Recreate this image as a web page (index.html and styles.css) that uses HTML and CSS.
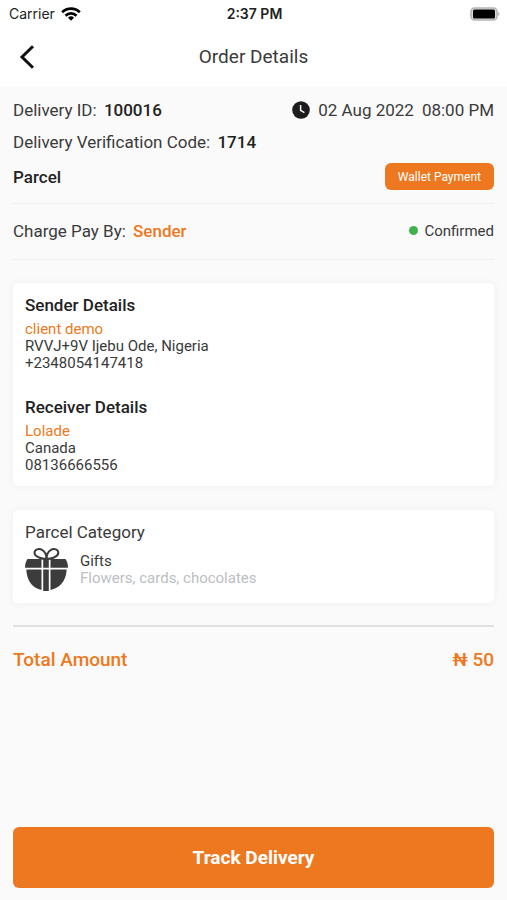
FILE: index.html
```html
<!DOCTYPE html>
<html lang="en">
  <head>
    <meta charset="UTF-8" />
    <meta name="viewport" content="width=device-width, initial-scale=1.0" />
    <title>Order Details</title>
    <link rel="stylesheet" href="styles.css">
  </head>
  <body>
    <header class="top">
      <div class="status-bar">
        <div class="carrier">
          <span>Carrier</span>
          <svg width="20" height="14" viewBox="0 0 20 14" fill="none" stroke="#000" stroke-width="2.7">
            <path d="M1.2 5.3a12.4 12.4 0 0 1 17.6 0" />
            <path d="M4.5 8.7a7.8 7.8 0 0 1 11 0" />
            <path d="M10 13.8L7 10.8a4.3 4.3 0 0 1 6 0z" fill="#000" stroke="none" />
          </svg>
        </div>
        <span class="clock">2:37 PM</span>
        <svg class="battery" width="30" height="14" viewBox="0 0 30 14">
          <rect x="1" y="1" width="26" height="12" rx="3.5" fill="#ddd" stroke="#b5b5b5" stroke-width="1.6" />
          <rect x="3" y="2.5" width="22" height="9" rx="1.5" fill="#000" />
          <path d="M28.2 5v4c1.6-.5 1.6-3.5 0-4z" fill="#aaa" />
        </svg>
      </div>
      <nav class="nav-bar">
        <button class="back-btn" type="button" aria-label="Back">
          <svg width="16" height="24" viewBox="0 0 16 24" fill="none" stroke="#111" stroke-width="3">
            <path d="M14 1.2L3 12l11 10.8" />
          </svg>
        </button>
        <h1>Order Details</h1>
      </nav>
    </header>

    <main>
      <section class="summary">
        <div class="row">
          <p>Delivery ID: <strong>100016</strong></p>
          <p class="date">
            <svg width="18" height="18" viewBox="0 0 18 18">
              <circle cx="9" cy="9" r="8.8" fill="#1c1c1c" />
              <path d="M8.6 4v5.4l3.8 2.2" fill="none" stroke="#fafafa" stroke-width="1.5" />
            </svg>
            <span>02 Aug 2022</span>
            <span>08:00 PM</span>
          </p>
        </div>
        <div class="row">
          <p>Delivery Verification Code: <strong>1714</strong></p>
        </div>
        <div class="row parcel">
          <h2>Parcel</h2>
          <button class="payment-btn" type="button">Wallet Payment</button>
        </div>
      </section>

      <section class="charge row">
        <p>Charge Pay By: <strong>Sender</strong></p>
        <p class="state">Confirmed</p>
      </section>

      <section class="card people">
        <div>
          <h2>Sender Details</h2>
          <p class="name">client demo</p>
          <p>RVVJ+9V Ijebu Ode, Nigeria</p>
          <p>+2348054147418</p>
        </div>
        <div>
          <h2>Receiver Details</h2>
          <p class="name">Lolade</p>
          <p>Canada</p>
          <p>08136666556</p>
        </div>
      </section>

      <section class="card category">
        <h2>Parcel Category</h2>
        <div class="category-item">
          <svg width="43" height="43" viewBox="0 0 43 43" fill="#3c3c3c">
            <path d="M2.5 11H16.5v8.8H0C0 16 1 13 2.5 11z" />
            <path d="M25.5 11h15C42 13 43 16 43 19.8H25.5z" />
            <path d="M1.3 21.5H16.5V42C8 40 2 34 1.3 21.5z" />
            <path d="M25.5 21.5h16.2C41 34 34 40 25.5 42z" />
            <path d="M18.2 11h5.6v8.8h-5.6zM18.2 21.5h5.6V43h-5.6z" />
            <path d="M21.5 11C17 11 10 9 9.500 5.200C9.300 1.500 14 0 17 1.800C20 3.500 21.500 7 21.500 11C21.500 7 23 3.500 26 1.800C29 0 33.500 1.500 33.300 5.200C33 9 26 11 21.500 11z" fill="none" stroke="#3c3c3c" stroke-width="2" />
          </svg>
          <div>
            <p>Gifts</p>
            <p class="hint">Flowers, cards, chocolates</p>
          </div>
        </div>
      </section>

      <section class="total row">
        <p>Total Amount</p>
        <p>₦ 50</p>
      </section>
    </main>

    <footer>
      <button class="track-btn" type="button">Track Delivery</button>
    </footer>
  </body>
</html>
```
FILE: styles.css
```css
* {
  margin: 0;
  padding: 0;
  box-sizing: border-box;
}
body {
  min-height: 100vh;
  display: flex;
  flex-direction: column;
  background-color: #fafafa;
  color: #3a3a3a;
  font-family: Roboto, "Liberation Sans", sans-serif;
  font-size: 17px;
}
button {
  border: none;
  font-family: inherit;
  cursor: pointer;
}
svg {
  display: block;
}

.top {
  background-color: #fff;
}
.status-bar {
  display: grid;
  grid-template-columns: 1fr auto 1fr;
  align-items: center;
  height: 27px;
  padding: 0 7px 0 9px;
  color: #222;
  font-family: Inter, sans-serif;
  font-size: 14px;
}
.carrier {
  display: flex;
  align-items: center;
  gap: 6px;
}
.clock {
  font-weight: 600;
}
.battery {
  justify-self: end;
}
.nav-bar {
  display: grid;
  grid-template-columns: 40px 1fr 40px;
  align-items: center;
  height: 59px;
  padding: 0 13px;
}
.nav-bar h1 {
  text-align: center;
  font-size: 19px;
  font-weight: 400;
}
.back-btn {
  padding: 6px;
  background: none;
}

main {
  flex: 1;
  padding: 8px 13px 0;
}
.row {
  display: flex;
  justify-content: space-between;
  align-items: center;
  min-height: 32px;
}
strong,
h2 {
  font-size: 17px;
  font-weight: 500;
  color: #222;
}
.row strong {
  margin-left: 3px;
}
.date {
  display: flex;
  align-items: center;
  gap: 8px;
}
.summary {
  padding-bottom: 8px;
  border-bottom: 1px solid #eee;
}
.parcel {
  min-height: 37px;
}
.payment-btn {
  height: 27px;
  padding: 0 13px;
  border-radius: 6px;
  background-color: #ee7820;
  color: #fff;
  font-size: 12px;
}
.charge {
  height: 56px;
  padding-bottom: 2px;
  border-bottom: 1px solid #eee;
}
.charge strong {
  color: #ee7820;
}
.state {
  display: flex;
  align-items: center;
  gap: 6px;
  font-size: 15px;
}
.state::before {
  content: "";
  width: 9px;
  height: 9px;
  border-radius: 50%;
  background-color: #41b04e;
}

.card {
  margin-top: 23px;
  padding: 11px 12px 12px;
  border-radius: 5px;
  background-color: #fff;
  box-shadow: 0 0 8px rgba(0, 0, 0, 0.05);
  font-size: 15px;
  line-height: 17px;
}
.card h2 {
  line-height: 22px;
}
.people {
  display: flex;
  flex-direction: column;
  gap: 24px;
}
.people h2 {
  margin-bottom: 5px;
}
.name {
  color: #ee7820;
}
.category {
  margin-top: 24px;
}
.category h2 {
  font-weight: 400;
  color: #3a3a3a;
}
.category-item {
  display: flex;
  align-items: center;
  gap: 12px;
  margin-top: 5px;
}
.hint {
  color: #bbbec2;
}

.total {
  height: 66px;
  margin-top: 22px;
  border-top: 2px solid #e0e0e0;
  color: #ee7820;
  font-size: 19px;
  font-weight: 500;
}

footer {
  padding: 12px 13px;
}
.track-btn {
  width: 100%;
  height: 61px;
  border-radius: 6px;
  background-color: #ee7820;
  color: #fff;
  font-size: 19px;
  font-weight: 700;
}
```
